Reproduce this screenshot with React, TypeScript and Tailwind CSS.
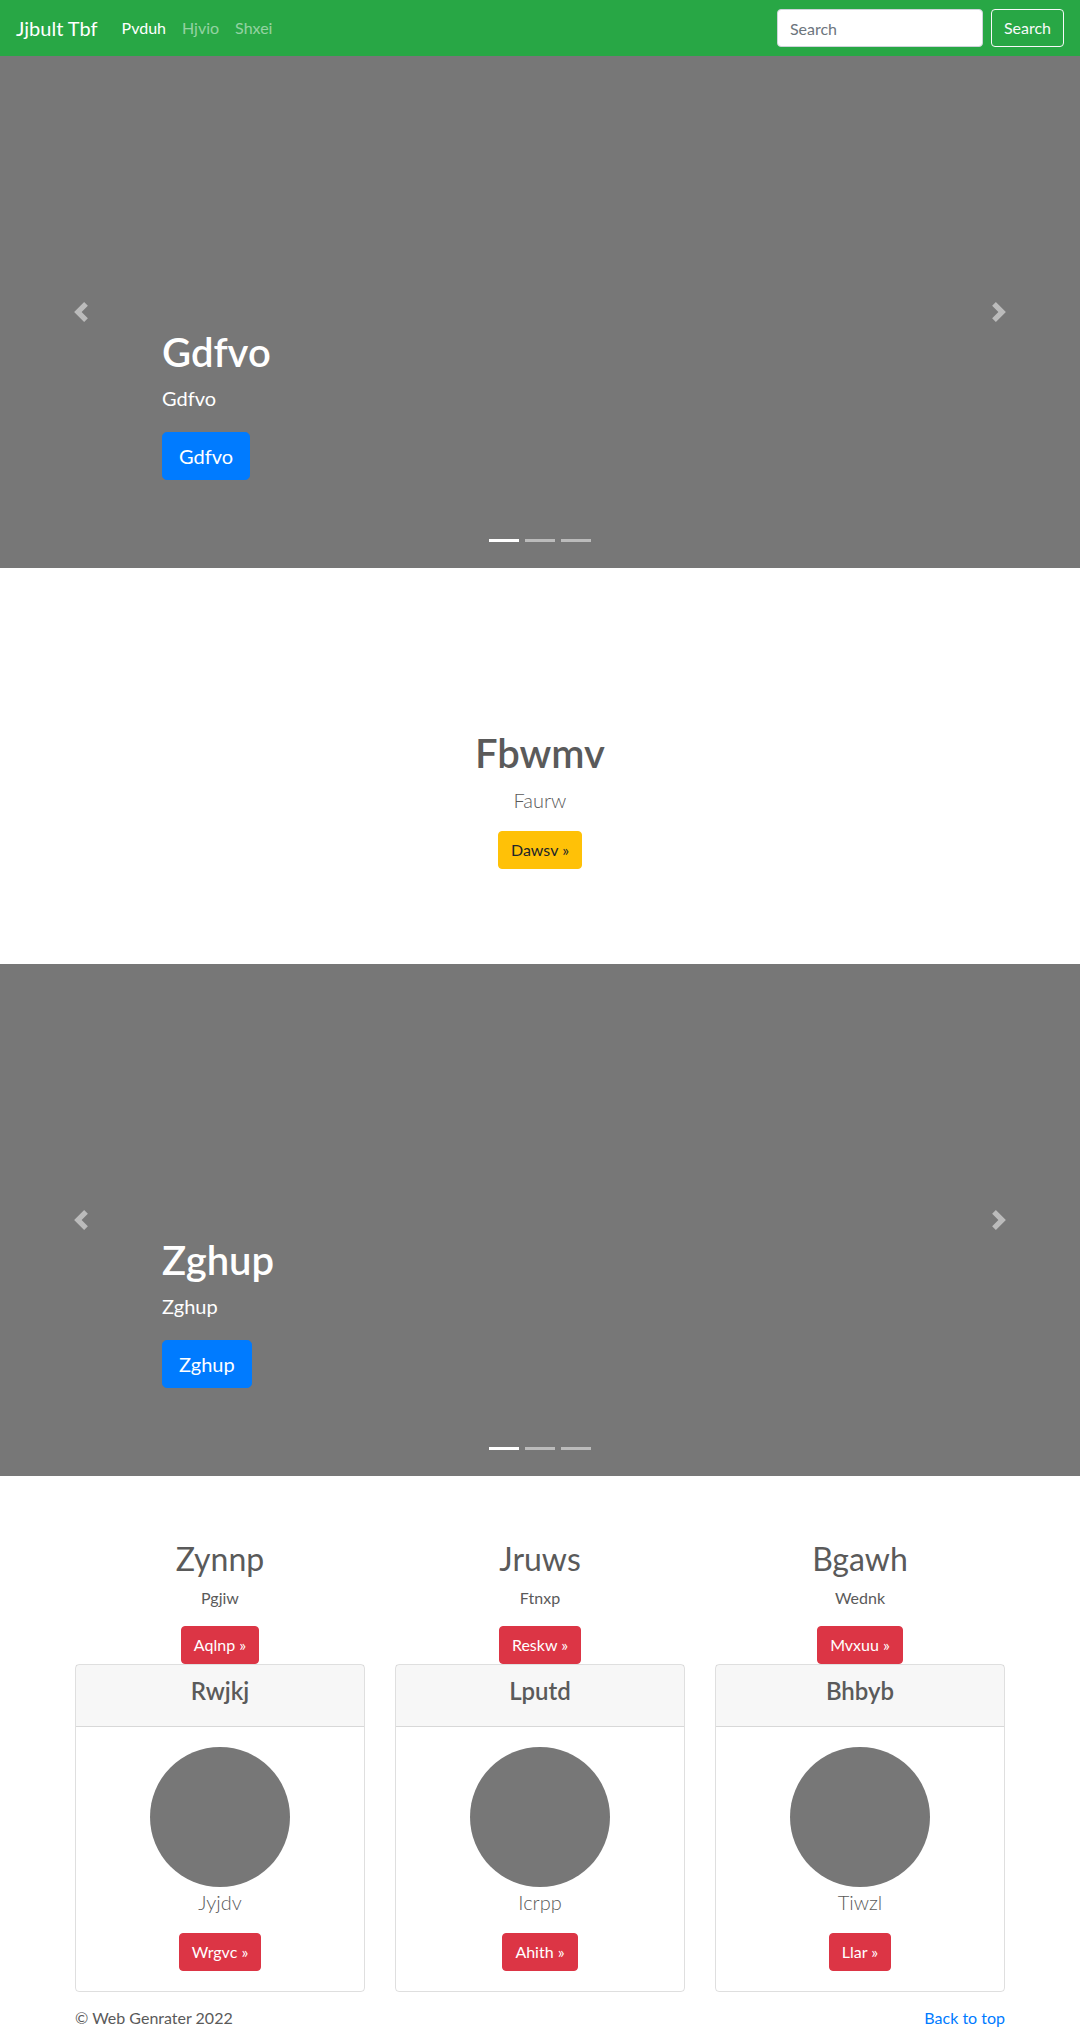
import React from 'react';

// bootstrap-ish carousel slide, placeholder grey
const Slide: React.FC<{ title: string }> = ({ title }) => {
  return (
    <div className="relative h-[512px] bg-[#777] mb-16 overflow-hidden">
      {/* indicators */}
      <ol className="absolute bottom-0 left-0 right-0 mb-4 flex justify-center">
        <li className="w-[30px] h-[3px] mx-[3px] my-[10px] bg-white"></li>
        <li className="w-[30px] h-[3px] mx-[3px] my-[10px] bg-white opacity-50"></li>
        <li className="w-[30px] h-[3px] mx-[3px] my-[10px] bg-white opacity-50"></li>
      </ol>

      {/* caption */}
      <div className="absolute left-[15%] right-[15%] bottom-12 py-5 text-left text-white">
        <h1 className="text-[40px] font-semibold leading-[1.2] mb-2">{title}</h1>
        <p className="text-xl leading-[1.4] mb-5">{title}</p>
        <div className="mb-5">
          <a className="inline-block align-top bg-[#007bff] border border-[#007bff] text-white text-xl leading-normal px-4 py-2 rounded-[4.8px]">
            {title}
          </a>
        </div>
      </div>

      {/* prev / next */}
      <a className="absolute top-0 bottom-0 left-0 w-[15%] flex items-center justify-center opacity-50">
        <svg width="20" height="20" viewBox="0 0 8 8" fill="#fff">
          <path d="M5.25 0l-4 4 4 4 1.5-1.5L4.25 4l2.5-2.5L5.25 0z" />
        </svg>
      </a>
      <a className="absolute top-0 bottom-0 right-0 w-[15%] flex items-center justify-center opacity-50">
        <svg width="20" height="20" viewBox="0 0 8 8" fill="#fff">
          <path d="M2.75 0l-1.5 1.5L3.75 4l-2.5 2.5L2.75 8l4-4-4-4z" />
        </svg>
      </a>
    </div>
  );
};

const columns = [
  { h: 'Zynnp', p: 'Pgjiw', btn: 'Aqlnp', card: 'Rwjkj', lead: 'Jyjdv', cardBtn: 'Wrgvc' },
  { h: 'Jruws', p: 'Ftnxp', btn: 'Reskw', card: 'Lputd', lead: 'Icrpp', cardBtn: 'Ahith' },
  { h: 'Bgawh', p: 'Wednk', btn: 'Mvxuu', card: 'Bhbyb', lead: 'Tiwzl', cardBtn: 'Llar' },
];

const RedButton: React.FC<{ label: string }> = ({ label }) => (
  <a className="inline-block align-top bg-[#dc3545] border border-[#dc3545] text-white text-base leading-normal px-3 py-1.5 rounded">
    {label} &raquo;
  </a>
);

const App: React.FC = () => {
  return (
    <div className="font-['Lato','Noto_Sans',sans-serif] text-[#5a5a5a] bg-white min-h-[2032px]">
      {/* Navbar */}
      <nav className="h-14 px-4 flex items-center bg-[#28a745]">
        <span className="text-xl text-white mr-4">Jjbult Tbf</span>
        <ul className="flex text-base">
          <li className="px-2 text-white">Pvduh</li>
          <li className="px-2 text-white/50">Hjvio</li>
          <li className="px-2 text-white/50">Shxei</li>
        </ul>
        <form className="ml-auto flex items-center">
          <input
            type="text"
            placeholder="Search"
            className="w-[206px] h-[38px] px-3 mr-2 text-base bg-white border border-[#ced4da] rounded text-[#495057] placeholder:text-[#6c757d] outline-none"
          />
          <button
            type="button"
            className="h-[38px] px-3 text-base border border-[#f8f9fa] text-[#f8f9fa] rounded"
          >
            Search
          </button>
        </form>
      </nav>

      <Slide title="Gdfvo" />

      {/* centered hero */}
      <section className="pb-[95px] pt-[33px] text-center">
        <div className="pt-16">
          <h1 className="text-[40px] font-semibold leading-[1.2] mb-2">Fbwmv</h1>
          <p className="text-xl font-light leading-normal mb-4">Faurw</p>
          <a className="inline-block align-top bg-[#ffc107] border border-[#ffc107] text-[#212529] text-base leading-normal px-3 py-1.5 rounded">
            Dawsv &raquo;
          </a>
        </div>
      </section>

      <Slide title="Zghup" />

      {/* marketing columns + cards */}
      <div className="w-[960px] mx-auto px-[15px]">
        <div className="grid grid-cols-3 gap-x-[30px]">
          {columns.map((c) => (
            <div key={c.h} className="text-center">
              <h2 className="text-[32px] font-normal leading-[1.2] mb-2">{c.h}</h2>
              <p className="text-base leading-normal mb-4">{c.p}</p>
              <RedButton label={c.btn} />
              <div className="border border-black/[0.125] rounded">
                <div className="bg-black/[0.03] border-b border-black/[0.125] px-5 py-3">
                  <h4 className="text-2xl font-semibold leading-[1.2] mb-2">{c.card}</h4>
                </div>
                <div className="p-5">
                  <div className="w-[140px] h-[140px] rounded-full bg-[#777] mx-auto"></div>
                  <p className="text-xl font-light leading-normal mb-4">{c.lead}</p>
                  <RedButton label={c.cardBtn} />
                </div>
              </div>
            </div>
          ))}
        </div>

        {/* footer */}
        <footer className="mt-[14px] flex justify-between text-base leading-normal">
          <p>&copy; Web Genrater 2022</p>
          <p>
            <a className="text-[#007bff]">Back to top</a>
          </p>
        </footer>
      </div>
    </div>
  );
};

export default App;
